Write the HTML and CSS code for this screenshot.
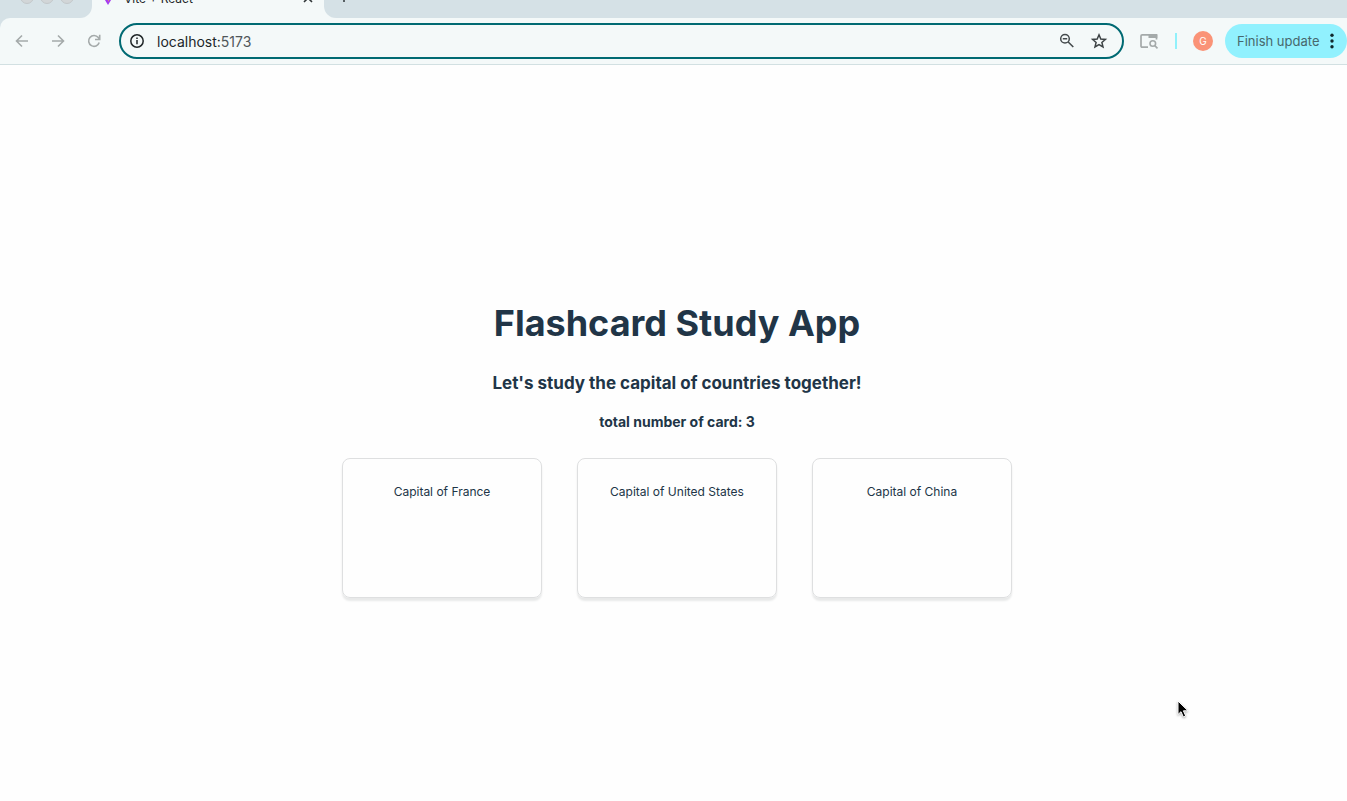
FILE: index.html
```html
<!DOCTYPE html>
<html lang="en">
<head>
<meta charset="utf-8">
<title>Vite + React</title>
<link rel="stylesheet" href="styles.css">
</head>
<body>
<header class="browser">
  <div class="tab-strip">
    <div class="window-controls"><span class="light"></span><span class="light"></span><span class="light"></span></div>
    <div class="tab">
      <svg class="favicon" width="16" height="16" viewBox="0 0 16 16" aria-hidden="true"><path d="M0 2h16L8 15z" fill="#a63df0"/><path d="M7 1l3 0-1 6h1L8 12V8H6z" fill="#ffb52e"/></svg>
      <span class="tab-title">Vite + React</span>
      <button class="tab-button" aria-label="Close tab"><svg width="12" height="12" viewBox="0 0 12 12"><path d="M2 2l8 8M10 2l-8 8" stroke="#303638" stroke-width="1.6"/></svg></button>
    </div>
    <div class="strip-rest">
      <button class="tab-button" aria-label="New tab"><svg width="12" height="12" viewBox="0 0 12 12"><path d="M6 0v11M0 6h12" stroke="#4a5255" stroke-width="1.8"/></svg></button>
    </div>
  </div>
  <div class="toolbar-back">
    <nav class="toolbar">
      <div class="nav-buttons">
        <button class="icon-button" aria-label="Back"><svg width="20" height="20" viewBox="0 0 20 20"><path d="M16 10H4.5M10 4.5L4.5 10l5.500 5.500" fill="none" stroke="#a4aaaa" stroke-width="1.6"/></svg></button>
        <button class="icon-button" aria-label="Forward"><svg width="20" height="20" viewBox="0 0 20 20"><path d="M4 10h11.500M10 4.500L15.500 10 10 15.500" fill="none" stroke="#a4aaaa" stroke-width="1.6"/></svg></button>
        <button class="icon-button" aria-label="Reload"><svg width="20" height="20" viewBox="0 0 20 20"><path d="M15.200 11.500A5.400 5.400 0 1 1 14.300 6.600L15.500 8M15.700 3.800v4.700H11" fill="none" stroke="#a4aaaa" stroke-width="1.6"/></svg></button>
      </div>
      <div class="omnibox">
        <svg width="16" height="16" viewBox="0 0 16 16" aria-hidden="true"><circle cx="8" cy="8" r="6.200" fill="none" stroke="#202628" stroke-width="1.500"/><path d="M8 7v4.200M8 4.400v1.500" stroke="#202628" stroke-width="1.500"/></svg>
        <a class="address" href="#">localhost:<span class="port">5173</span></a>
        <button class="icon-button" aria-label="Zoom"><svg width="20" height="20" viewBox="0 0 20 20"><circle cx="8" cy="7.700" r="4.300" fill="none" stroke="#454b4d" stroke-width="1.500"/><path d="M5.800 7.700h4.400M11.200 11l5.100 5" stroke="#454b4d" stroke-width="1.600"/></svg></button>
        <button class="icon-button" aria-label="Bookmark this tab"><svg width="20" height="20" viewBox="0 0 20 20"><path d="M10 3.800l1.800 4.200 4.600.4-3.500 3 1.100 4.500L10 13.500l-4 2.400 1.100-4.500-3.500-3 4.600-.4z" fill="none" stroke="#3d4345" stroke-width="1.500"/></svg></button>
      </div>
      <button class="icon-button" aria-label="Search side panel"><svg width="20" height="20" viewBox="0 0 20 20"><path d="M9 16.200H3.200Q2 16.200 2 15V5Q2 3.800 3.200 3.800H17.500V8.500" fill="none" stroke="#a4aaaa" stroke-width="1.700"/><path d="M9.500 3H17q1.300 0 1.300 1.300V7H9.500z" fill="#a4aaaa"/><circle cx="13.800" cy="12.500" r="2.800" fill="none" stroke="#a4aaaa" stroke-width="1.600"/><path d="M15.700 14.500l2.800 2.900" stroke="#a4aaaa" stroke-width="1.700"/></svg></button>
      <span class="divider"></span>
      <button class="avatar" aria-label="Profile">G</button>
      <button class="update">Finish update
        <svg width="4" height="16" viewBox="0 0 4 16" aria-hidden="true"><g fill="#10282c"><circle cx="2" cy="2.300" r="1.700"/><circle cx="2" cy="8" r="1.700"/><circle cx="2" cy="13.700" r="1.700"/></g></svg>
      </button>
    </nav>
  </div>
</header>
<main class="app">
  <h1 class="title">Flashcard Study App</h1>
  <h2 class="subtitle">Let's study the capital of countries together!</h2>
  <h3 class="count">total number of card: 3</h3>
  <div class="cards">
    <article class="card">Capital of France</article>
    <article class="card">Capital of United States</article>
    <article class="card">Capital of China</article>
  </div>
</main>
<svg class="pointer" width="16" height="22" viewBox="0 0 16 22" aria-hidden="true"><path d="M2 2v13.500l3-2.800 2.300 5.200 2.400-1-2.300-5.100H12z" fill="#000" stroke="#fff" stroke-width="1"/></svg>
</body>
</html>
```
FILE: styles.css
```css
* { box-sizing: border-box; }

body {
  margin: 0;
  min-height: 100vh;
  display: flex;
  flex-direction: column;
  overflow: hidden;
  background: #fefefe;
  color: #213547;
  font-family: Inter, "Liberation Sans", sans-serif;
}

button {
  padding: 0;
  border: 0;
  background: none;
  color: inherit;
  font: inherit;
}

svg { display: block; flex: none; }

.browser { background: #f4f9f9; }

/* Only the lower part of the tab row is in view */
.tab-strip {
  display: flex;
  align-items: flex-end;
  height: 18px;
  overflow: hidden;
}

.window-controls, .tab, .strip-rest {
  display: flex;
  flex: none;
  align-items: center;
  height: 40px;
}

.window-controls {
  gap: 6px;
  width: 92px;
  padding: 0 0 2px 20px;
  background: #d5e1e6;
  border-radius: 0 0 12px 0;
}

.light {
  width: 14px;
  height: 14px;
  border: 1px solid #c3c8ca;
  border-radius: 50%;
  background: #d2d6d8;
}

.tab {
  width: 232px;
  gap: 8px;
  padding: 0 10px 0 8px;
}

.tab-title {
  flex: 1;
  color: #202628;
  font-size: 12px;
}

.strip-rest {
  flex: 1;
  padding: 0 14px 2px;
  background: #d5e1e6;
  border-radius: 0 0 0 12px;
}

.toolbar-back { background: #d5e1e6; }

.toolbar {
  display: flex;
  align-items: center;
  height: 47px;
  padding-left: 12px;
  background: #f4f9f9;
  border-bottom: 1px solid #d2e0e2;
  border-radius: 10px 0 0 0;
}

.nav-buttons {
  display: flex;
  gap: 16px;
  margin-right: 15px;
}

.omnibox {
  flex: 1;
  display: flex;
  align-items: center;
  gap: 12px;
  height: 36px;
  margin-right: 15px;
  padding: 0 13px 0 8px;
  border: 2px solid #006a73;
  border-radius: 18px;
}

.address {
  flex: 1;
  color: #202628;
  font-size: 14px;
  text-decoration: none;
}

.port { color: #50575a; }

.divider {
  width: 2px;
  height: 16px;
  margin: 0 16px;
  background: #91f1fb;
}

.avatar {
  width: 20px;
  height: 20px;
  border-radius: 50%;
  background: #fa9377;
  color: #fff;
  font-size: 10px;
}

.update {
  display: flex;
  align-items: center;
  justify-content: space-between;
  width: 122px;
  height: 34px;
  margin-left: 12px;
  padding: 0 13px 0 12px;
  border-radius: 17px;
  background: #91f1fe;
  color: #47686d;
  font-size: 13px;
  white-space: nowrap;
}

.app {
  flex: 1;
  display: flex;
  flex-direction: column;
  align-items: center;
  justify-content: center;
  padding: 33px 0 0 7px;
  text-align: center;
}

.title {
  margin: 0 0 27px;
  font-size: 36px;
  line-height: 44px;
}

.subtitle {
  margin: 0 0 19px;
  font-size: 17px;
  line-height: 22px;
}

.count {
  margin: 0 0 27px;
  font-size: 14px;
  line-height: 18px;
}

.cards {
  display: flex;
  gap: 35px;
}

.card {
  width: 200px;
  min-height: 140px;
  padding: 24px;
  border: 1px solid #dedfe0;
  border-radius: 8px;
  box-shadow: 0 3px 2px #e8e9e9;
  font-size: 12px;
  line-height: 18px;
}

.pointer {
  position: absolute;
  left: 1176px;
  top: 699px;
  filter: drop-shadow(0 1px 1px #aaa);
}
```
